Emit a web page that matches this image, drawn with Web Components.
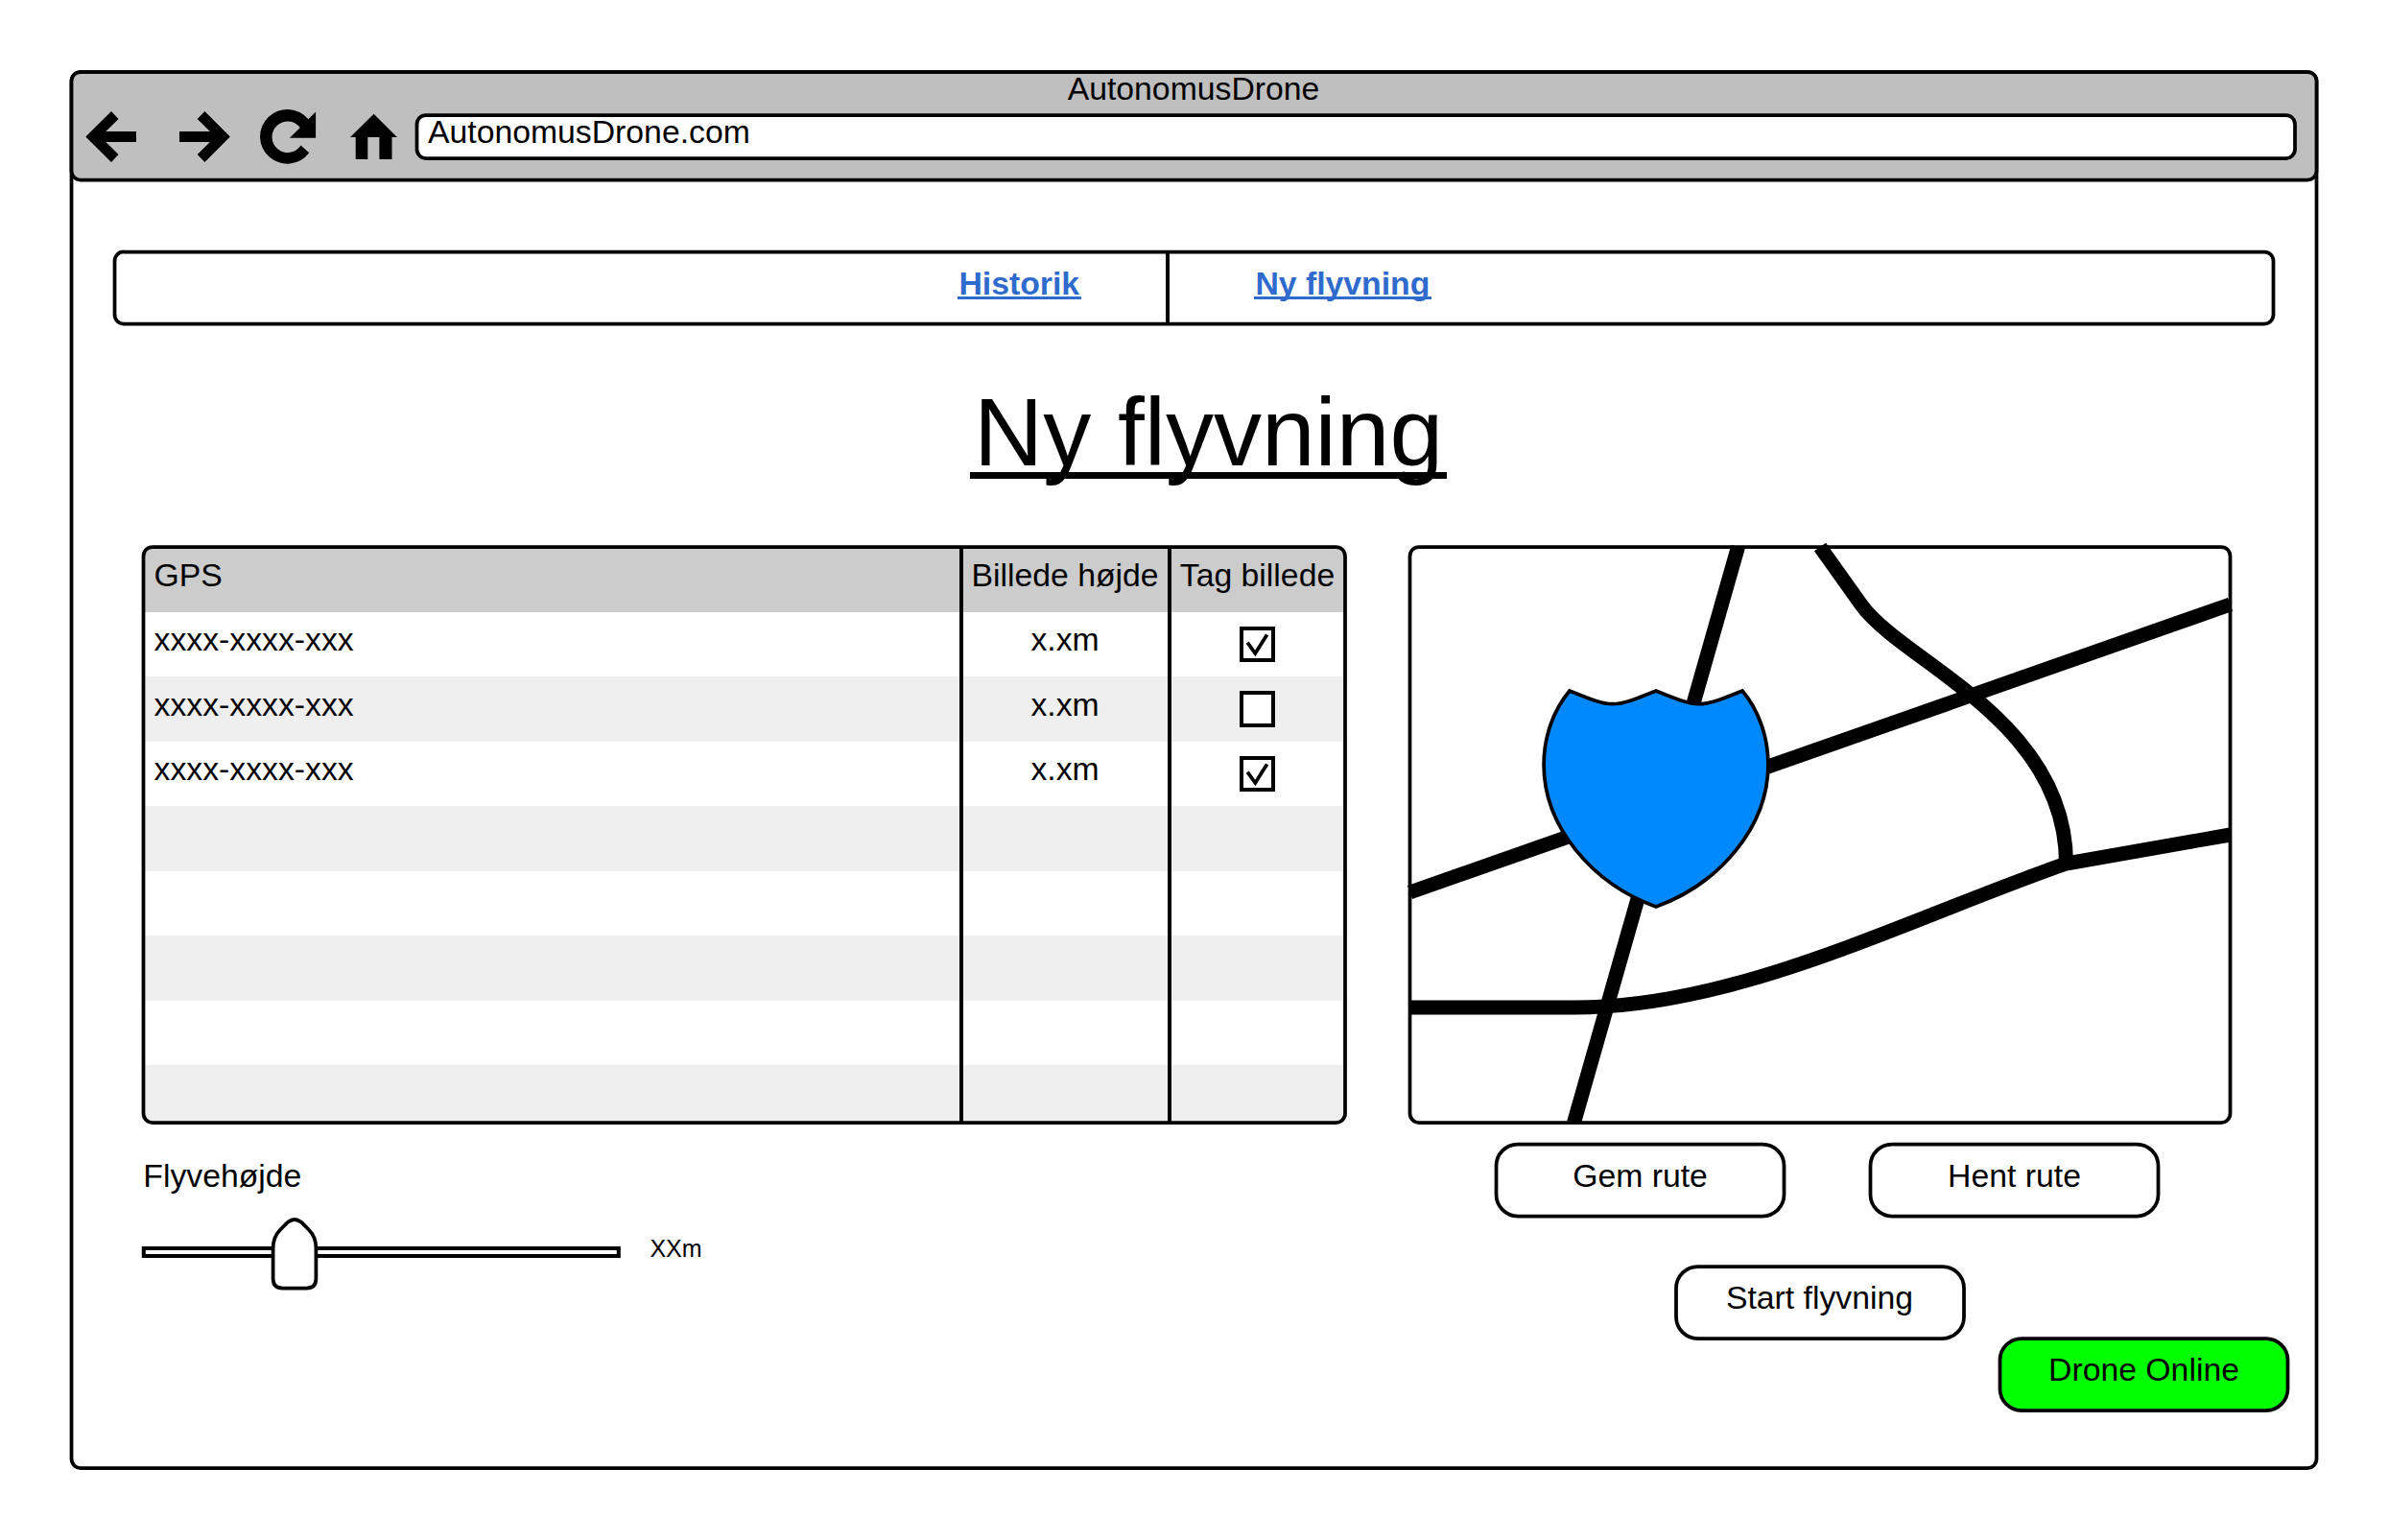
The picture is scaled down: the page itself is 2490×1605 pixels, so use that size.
<!DOCTYPE html>
<html lang="da">
<head>
<meta charset="utf-8">
<title>AutonomusDrone</title>
<style>
  html, body { margin: 0; background: #fff; }
  body {
    box-sizing: border-box; width: 2490px; height: 1605px; padding: 75px; overflow: hidden;
    font: 33.75px/40px "Liberation Sans", Arial, sans-serif; color: #000;
  }
</style>
</head>
<body>
<drone-app></drone-app>

<script>
const define = (name, html, setup) => customElements.define(name, class extends HTMLElement {
  connectedCallback() {
    if (this.shadowRoot) return;
    const root = this.attachShadow({ mode: 'open' });
    const t = document.createElement('template');
    t.innerHTML = typeof html === 'function' ? html(this) : html;
    root.append(t.content.cloneNode(true));
    if (setup) setup(this, root);
  }
});

/* Outlined rounded box. dx/dy shift the outline by a fraction of a pixel. */
define('wire-frame', el => {
  const a = (n, d) => el.getAttribute(n) ?? d;
  const w = a('w'), h = a('h');
  return `<style>
    :host { display: grid; width: ${Math.ceil(w)}px; height: ${Math.ceil(h)}px; flex: none; }
    svg, .in { grid-area: 1 / 1; min-width: 0; min-height: 0; }
    svg { width: 100%; height: 100%; overflow: visible; pointer-events: none; z-index: ${el.hasAttribute('over') ? 1 : 0}; }
    .in { z-index: ${el.hasAttribute('over') ? 0 : 1}; }
  </style>
  <svg aria-hidden="true"><rect x="${a('dx', 0)}" y="${a('dy', 0)}" width="${w}" height="${h}" rx="${a('r', 9.5)}"
    fill="${a('fill', '#fff')}" stroke="#000" stroke-width="3.75"/></svg>
  <div class="in"><slot></slot></div>`;
});

const icons = {
  back: ['75', '<path d="M89.3 142.5 116 116 123.5 124 110.3 137H142V148H110.3L123.5 161 116 169Z"/>'],
  forward: ['165', '<path d="M239.8 142.5 213.4 116 205.7 124 218.9 137H187V148H218.9L205.7 161 213.4 169Z"/>'],
  reload: ['255', '<path d="M321.4 124.3A28.4 28.4 0 1 0 322.2 159.3L313.5 151.6A16.3 16.3 0 1 1 312.8 132.9L301.9 143.7H329.1V116.6Z"/>'],
  home: ['345', '<path d="M389.6 118.7 414 143H408.5V166H395.4V143H383.3V166H370.7V143H365Z"/>']
};
define('nav-icon', el => {
  const [x, shape] = icons[el.getAttribute('name')];
  return `<style>:host { display: block; width: 90px; height: 60px; } svg { display: block; }</style>
    <svg width="90" height="60" viewBox="${x} 112 90 60">${shape}</svg>`;
});

define('browser-chrome', `<style>
    :host { display: block; height: 113px; }
    .title { text-align: center; height: 40px; margin-top: -3px; padding-right: 2px; }
    .bar { display: flex; align-items: flex-start; margin-top: 8px; }
    .icons { display: flex; margin-top: -8px; }
    .url { margin: -3px 0 0 11px; }
    .col { display: flex; flex-direction: column; }
  </style>
  <wire-frame w="2340" h="112.5" dx="-.5" fill="#bfbfbf"><div class="col">
    <div class="title"><slot name="title"></slot></div>
    <div class="bar">
      <div class="icons"><nav-icon name="back"></nav-icon><nav-icon name="forward"></nav-icon><nav-icon name="reload"></nav-icon><nav-icon name="home"></nav-icon></div>
      <wire-frame w="1957.5" h="45" dx="-.5"><div class="url"><slot name="url"></slot></div></wire-frame>
    </div>
  </div></wire-frame>`);

define('link-bar', `<style>
    :host { display: block; }
    .row { display: grid; grid-template-columns: 1095px 4px 1fr; height: 75px; }
    .line { background: #000; }
    .cell { display: flex; padding-top: 12px; }
    .l { justify-content: flex-end; padding-right: 88.5px; }
    .r { padding-left: 88px; }
    ::slotted(a) {
      color: #2f6bcd; font-weight: bold; text-decoration: none; padding: 0 1.4px; height: 40px;
      background: linear-gradient(#2f6bcd, #2f6bcd) 0 34px / 100% 3px no-repeat;
    }
  </style>
  <wire-frame w="2250" h="75" dx="-.5" dy="-.5"><div class="row">
    <div class="cell l"><slot name="left"></slot></div><div class="line"></div><div class="cell r"><slot name="right"></slot></div>
  </div></wire-frame>`);

define('page-heading', `<style>
    :host { display: flex; justify-content: center; height: 176px; padding: 56px 0 0 29px; }
    h1 {
      margin: 0; font: 100px/112px "Liberation Sans", Arial, sans-serif; height: 112px; padding: 0 4.3px;
      background: linear-gradient(#000, #000) 0 98px / 100% 7px no-repeat;
    }
  </style><h1><slot></slot></h1>`);

define('check-box', el => `<style>
    :host { display: block; box-sizing: border-box; width: 37.5px; height: 37.5px; border: 4px solid #000; background: #fff; }
    svg { display: block; margin: -4px; }
  </style>
  <svg width="37" height="37" viewBox="0 0 37 37">${el.hasAttribute('checked')
    ? '<path d="M8.2 16.6 16.3 28 28.6 8.4" fill="none" stroke="#000" stroke-width="3.75"/>' : ''}</svg>`);

define('route-row', `<style>
    :host { display: grid; grid-template-columns: 850px 217px 1fr; height: 67.5px; }
    :host([head]) { background: #ccc; }
    :host([alt]) { background: #efefef; }
    div { box-sizing: border-box; padding-top: 8.5px; }
    .a { padding-left: 10.6px; }
    .b, .c { border-left: 4px solid #000; text-align: center; white-space: nowrap; }
    .b { padding-right: 1px; }
    .c { display: grid; justify-content: center; align-content: center; padding: 0 3px 0 0; }
    :host([head]) div { padding-top: 9px; }
    :host([head]) .c { align-content: start; }
  </style>
  <div class="a"><slot name="gps"></slot></div><div class="b"><slot name="height"></slot></div><div class="c"><slot name="photo"></slot></div>`);

define('route-table', `<style>
    :host { display: block; }
    .clip { height: 600px; overflow: hidden; border-radius: 9.5px; }
  </style>
  <wire-frame w="1252.5" h="600" dx="-.5" fill="none" over><div class="clip"><slot></slot></div></wire-frame>`);

define('height-slider', `<style>
    :host { display: block; padding-top: 35px; }
    .label { margin-left: -.7px; }
    .row { display: flex; align-items: flex-start; margin-top: 20px; }
    svg { display: block; overflow: visible; }
    .value { font-size: 25px; line-height: 30px; margin: 21px 0 0 30.4px; }
  </style>
  <div class="label"><slot></slot></div>
  <div class="row">
    <svg width="497" height="85" viewBox="150 1265 497 85" fill="#fff" stroke="#000" stroke-width="3.75">
      <rect x="149.8" y="1301" width="495" height="8" stroke-width="4"/>
      <path d="M284.6 1301C284.6 1293 287.4 1286.5 292 1281.8L299.5 1274.2Q307 1267.7 314.5 1274.2L322 1281.8C326.6 1286.5 329.4 1293 329.4 1301V1332.5Q329.4 1342.5 319.4 1342.5H294.6Q284.6 1342.5 284.6 1332.5Z"/>
    </svg>
    <div class="value"><slot name="value"></slot></div>
  </div>`);

define('route-map', `<style>
    :host { display: block; }
    svg { display: block; overflow: visible; }
  </style>
  <wire-frame w="855" h="600" dx="-.5">
    <svg width="855" height="600" viewBox="0.5 0 855 600" fill="none" stroke="#000" stroke-width="15">
      <path d="M342 0 171 600M0 360 855 60"/>
      <path d="M0 480H171C342 480 513 390 684 330L855 300"/>
      <path d="M427.5 0 470.25 60C513 120 684 180 684 330"/>
      <path stroke-width="3.75" fill="#0088ff" transform="translate(256.5 150)"
        d="M-90 0C-45 18.3-45 18.3 0 0C45 18.3 45 18.3 90 0C107 20 116.9 48 116.9 77C116.9 142 66 201 0 225C-66 201-116.9 142-116.9 77C-116.9 48-107 20-90 0Z"/>
    </svg>
  </wire-frame>`);

define('wire-button', el => `<style>
    :host { display: block; width: 300px; height: 75px; }
    .label { text-align: center; padding: 12px 1px 0 0; }
  </style>
  <wire-frame w="300" h="75" r="22.5" dx="${el.getAttribute('dx') || 0}" dy="${el.getAttribute('dy') || 0}"
    fill="${el.getAttribute('fill') || '#fff'}"><div class="label"><slot></slot></div></wire-frame>`);

define('drone-app', `<style>
    :host { display: block; width: 2340px; height: 1455px; }
    .page { display: flex; flex-direction: column; }
    .nav { padding: 75px 45px 0; }
    main { display: grid; grid-template-columns: 1253px 855px; column-gap: 67px; padding-left: 75px; }
    .pair { display: flex; gap: 90px; padding: 23px 0 0 90px; }
    .start { padding: 52px 0 0 277px; }
    footer { display: flex; justify-content: flex-end; padding-right: 30px; }
  </style>
  <wire-frame w="2340" h="1455" dx="-.5"><div class="page">
    <browser-chrome><span slot="title">AutonomusDrone</span><span slot="url">AutonomusDrone.com</span></browser-chrome>
    <div class="nav"><link-bar><a slot="left" href="#historik">Historik</a><a slot="right" href="#ny">Ny flyvning</a></link-bar></div>
    <page-heading>Ny flyvning</page-heading>
    <main>
      <section>
        <route-table>
          <route-row head><span slot="gps">GPS</span><span slot="height">Billede højde</span><span slot="photo">Tag billede</span></route-row>
          <route-row><span slot="gps">xxxx-xxxx-xxx</span><span slot="height">x.xm</span><check-box slot="photo" checked></check-box></route-row>
          <route-row alt><span slot="gps">xxxx-xxxx-xxx</span><span slot="height">x.xm</span><check-box slot="photo"></check-box></route-row>
          <route-row><span slot="gps">xxxx-xxxx-xxx</span><span slot="height">x.xm</span><check-box slot="photo" checked></check-box></route-row>
          <route-row alt></route-row><route-row></route-row><route-row alt></route-row><route-row></route-row><route-row alt></route-row>
        </route-table>
        <height-slider>Flyvehøjde<span slot="value">XXm</span></height-slider>
      </section>
      <section>
        <route-map></route-map>
        <div class="pair"><wire-button dx="-.5" dy="-.5">Gem rute</wire-button><wire-button dx="-.5" dy="-.5">Hent rute</wire-button></div>
        <div class="start"><wire-button>Start flyvning</wire-button></div>
      </section>
    </main>
    <footer><wire-button dx="-.5" fill="#00ff00">Drone Online</wire-button></footer>
  </div></wire-frame>`);
</script>
</body>
</html>
